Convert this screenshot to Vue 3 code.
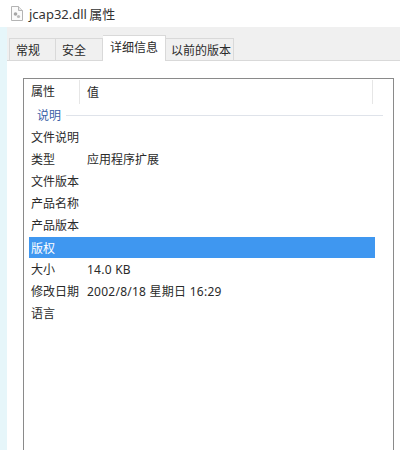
<script setup>
const tabs = [
  { name: '常规', cls: 'w1' },
  { name: '安全', cls: 'w1' },
  { name: '详细信息', cls: 'w2 active' },
  { name: '以前的版本', cls: 'w3' },
];

const rows = [
  { label: '文件说明', value: '' },
  { label: '类型', value: '应用程序扩展' },
  { label: '文件版本', value: '' },
  { label: '产品名称', value: '' },
  { label: '产品版本', value: '' },
  { label: '版权', value: '', selected: true },
  { label: '大小', value: '14.0 KB', wide: true },
  { label: '修改日期', value: '2002/8/18 星期日 16:29', wide: true },
  { label: '语言', value: '' },
];
</script>

<template>
  <div class="window">
    <div class="title">
      <svg class="file-icon" width="13" height="15" viewBox="0 0 13 15">
        <path d="M1.5 .5H8.5L12.5 4.5V14.5H1.5Z" fill="#fbfbfb" stroke="#b4b4b4" />
        <path d="M8.5 .5V4.5H12.5" fill="#e8e8e8" stroke="#b4b4b4" />
        <circle cx="5.5" cy="8" r="1.8" fill="#a6a6a6" />
        <circle cx="8.5" cy="10.5" r="1.6" fill="#bcbcbc" />
      </svg>
      <span>jcap32.dll 属性</span>
    </div>
    <div class="body">
      <div class="tabs">
        <div v-for="tab in tabs" :key="tab.name" class="tab" :class="tab.cls">{{ tab.name }}</div>
      </div>
      <div class="page">
        <div class="frame">
          <div class="row head">
            <div class="col-name">属性</div>
            <div class="col-value">值</div>
          </div>
          <div class="group">
            <span>说明</span>
            <i></i>
          </div>
          <div v-for="row in rows" :key="row.label" class="row" :class="{ selected: row.selected }">
            <div class="col-name">{{ row.label }}</div>
            <div class="col-value" :class="{ wide: row.wide }">{{ row.value }}</div>
          </div>
        </div>
      </div>
    </div>
  </div>
</template>

<style>
html, body {
  margin: 0;
  overflow: hidden;
  background: #fff;
}
</style>

<style scoped>
.window {
  width: 400px;
  height: 450px;
  background: #fff;
  color: #2a2a2a;
  font-family: "Noto Sans", "Noto Sans CJK SC", sans-serif;
  font-size: 12px;
  overflow: hidden;
}

.title {
  height: 27px;
  display: flex;
  align-items: center;
  padding-left: 10px;
  padding-bottom: 1px;
  box-sizing: border-box;
  font-size: 13px;
  word-spacing: -1px;
  color: #333;
}

.file-icon {
  margin-right: 6px;
}

.body {
  height: 423px;
  border-left: 7px solid #e6f6fa;
  display: flex;
  flex-direction: column;
}

.tabs {
  height: 34px;
  flex: none;
  box-sizing: border-box;
  padding-left: 2px;
  background: #f0f0f0;
  border-bottom: 1px solid #d9d9d9;
  display: flex;
  align-items: flex-end;
}

.tab {
  height: 22px;
  box-sizing: border-box;
  border: 1px solid #d9d9d9;
  border-bottom: 0;
  border-left-width: 0;
  display: flex;
  align-items: center;
}

.tab:first-child {
  border-left-width: 1px;
}

.w1 {
  width: 47px;
  padding-left: 6px;
}

.w2 {
  width: 63px;
  padding-left: 7px;
}

.w3 {
  width: 68px;
  padding-left: 5px;
}

.tab.active {
  height: 26px;
  margin-bottom: -1px;
  padding-bottom: 3px;
  background: #fff;
  position: relative;
}

.page {
  flex: 1;
  padding: 17px 6px 0 16px;
  background: #fff;
}

.frame {
  height: 400px;
  box-sizing: border-box;
  border: 1px solid #8a8a8a;
  border-bottom: 0;
  padding-top: 1px;
}

.row {
  height: 22px;
  width: 346px;
  margin-left: 5px;
  box-sizing: border-box;
  display: flex;
  align-items: center;
}

.head {
  height: 24px;
  width: 344px;
  border-right: 1px solid #e6e6e6;
}

.col-name {
  width: 50px;
  box-sizing: border-box;
  padding-left: 2px;
  flex: none;
}

.col-value {
  padding-left: 8px;
}

.wide {
  letter-spacing: 0.25px;
}

.head .col-name {
  width: 51px;
  line-height: 24px;
  border-right: 1px solid #e6e6e6;
}

.head .col-value {
  padding-left: 7px;
}

.group {
  height: 22px;
  display: flex;
  align-items: center;
  color: #3a5fa8;
  padding-left: 13px;
  padding-right: 10px;
}

.group i {
  flex: 1;
  height: 1px;
  margin-left: 5px;
  background: #dfe3ea;
}

.selected {
  background: #3f97f0;
  background-clip: padding-box;
  border-top: 1px solid transparent;
  color: #fff;
}
</style>
